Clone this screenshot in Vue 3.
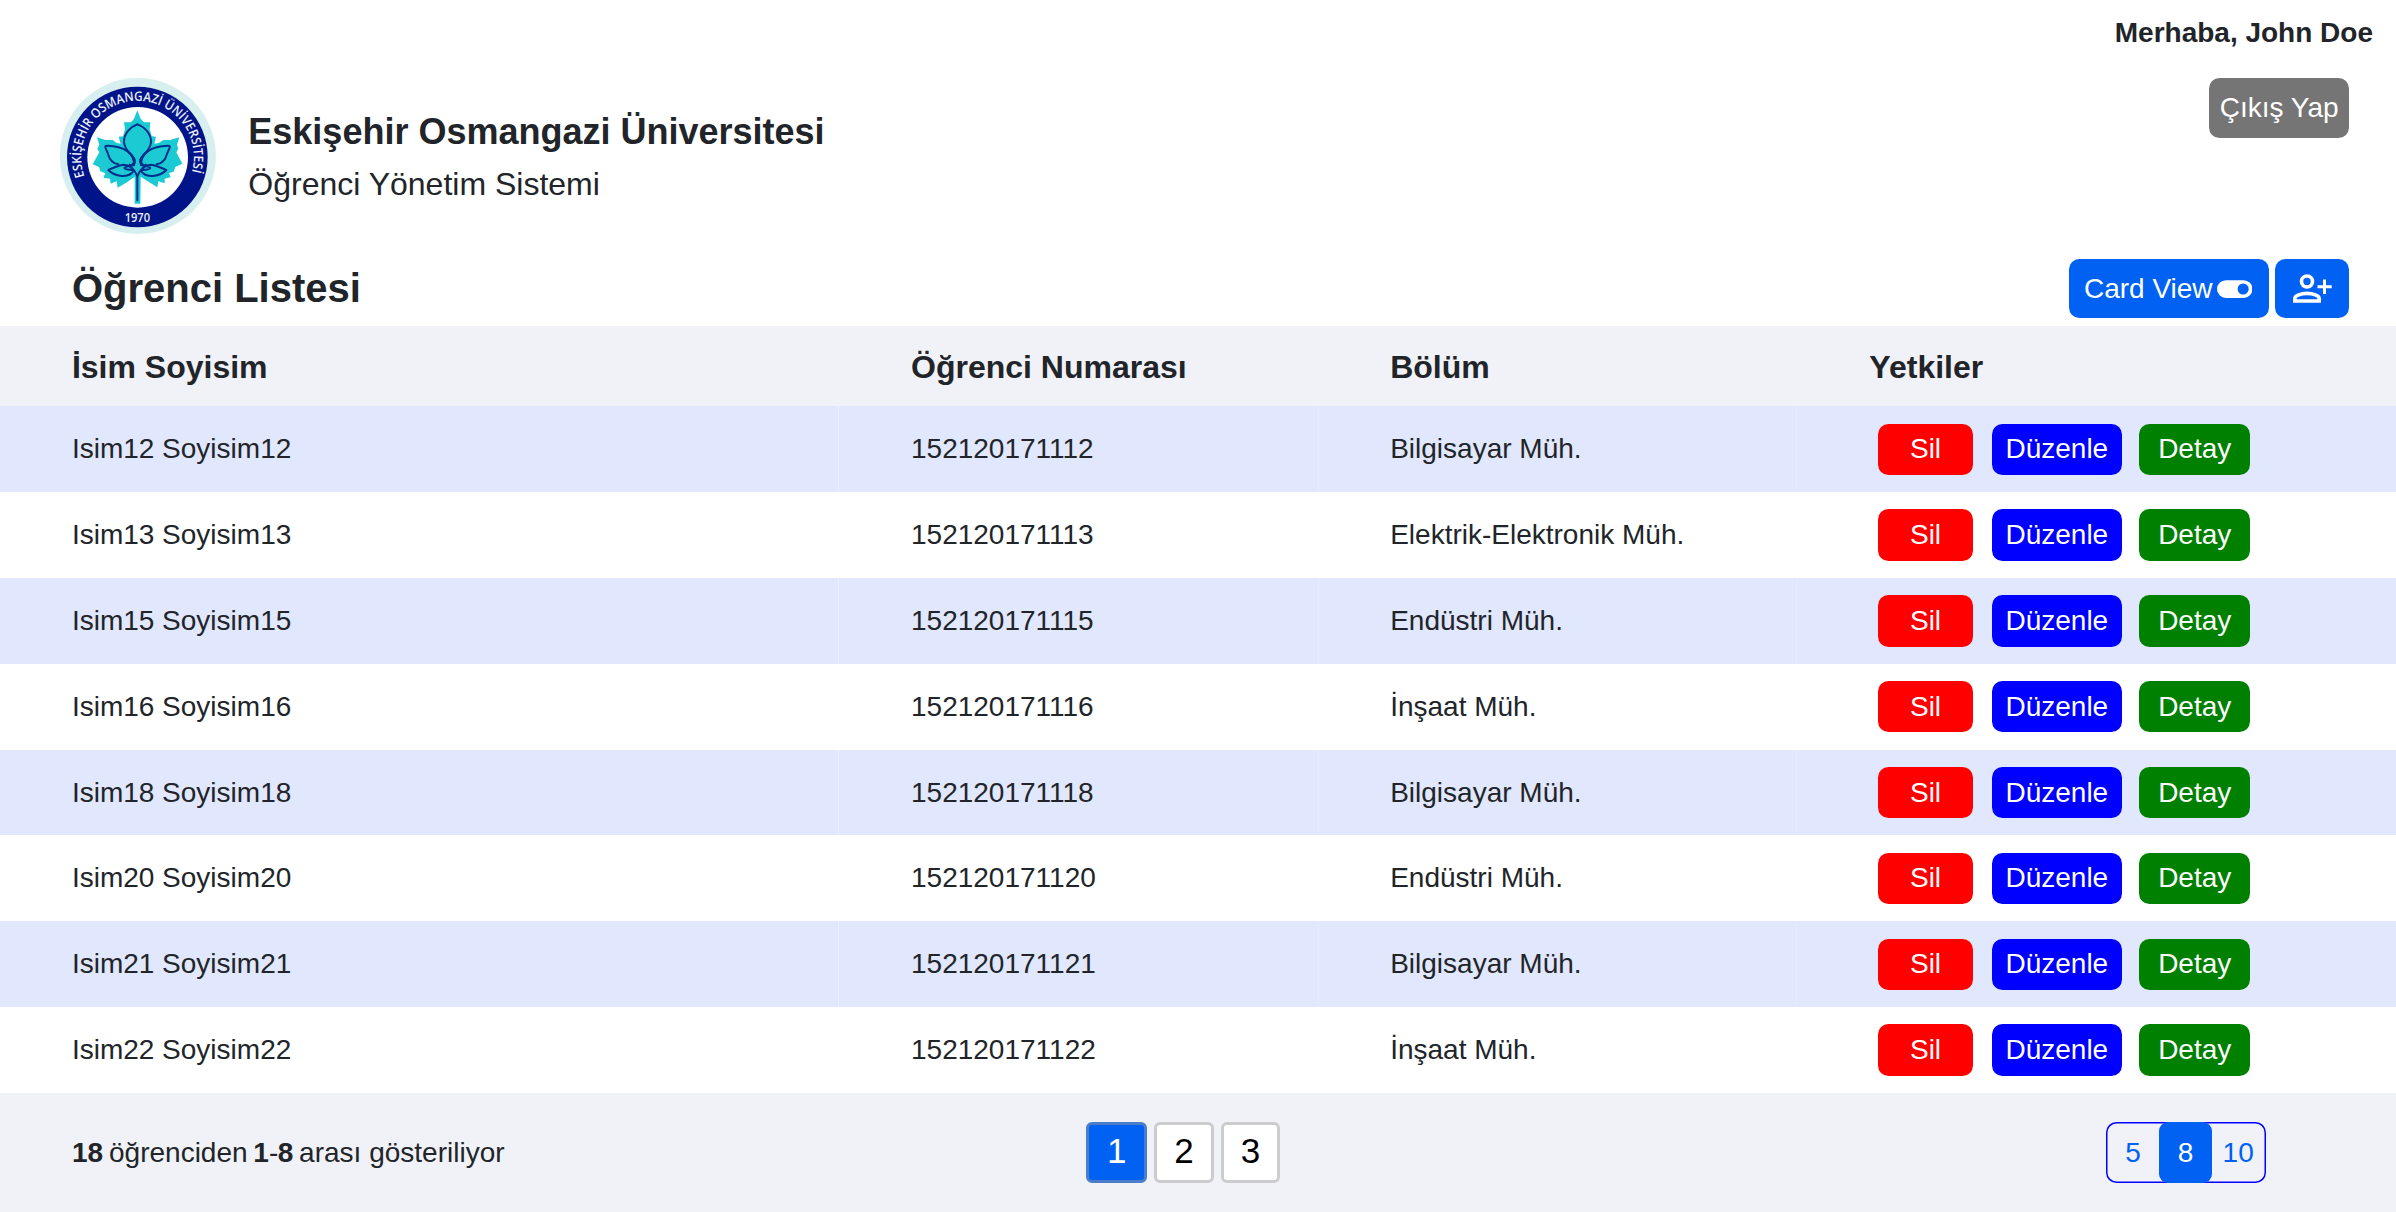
<script setup>
import { ref } from 'vue'

const students = [
  { name: 'Isim12 Soyisim12', number: '152120171112', department: 'Bilgisayar Müh.' },
  { name: 'Isim13 Soyisim13', number: '152120171113', department: 'Elektrik-Elektronik Müh.' },
  { name: 'Isim15 Soyisim15', number: '152120171115', department: 'Endüstri Müh.' },
  { name: 'Isim16 Soyisim16', number: '152120171116', department: 'İnşaat Müh.' },
  { name: 'Isim18 Soyisim18', number: '152120171118', department: 'Bilgisayar Müh.' },
  { name: 'Isim20 Soyisim20', number: '152120171120', department: 'Endüstri Müh.' },
  { name: 'Isim21 Soyisim21', number: '152120171121', department: 'Bilgisayar Müh.' },
  { name: 'Isim22 Soyisim22', number: '152120171122', department: 'İnşaat Müh.' }
]
const page = ref(1)
const pageSize = ref(8)
</script>

<template>
  <div class="app">
    <div class="greeting">Merhaba, John Doe</div>

    <header class="brand">
      <svg class="logo" viewBox="30 24 468 468">
        <circle cx="263.500" cy="258" r="234" fill="#d7efef" />
        <circle cx="262" cy="261" r="211" fill="#001489" />
        <circle cx="263" cy="262" r="151" fill="#fff" />
        <path
          fill="#1bcad3"
          d="M262 121 L272 146 L282 157 L301 157 L299 178 L305 199 L318 200 L313 221 L326 219 L340 210 L360 210 L388 202 L381 225 L385 236 L379 247 L397 281 L376 291 L371 305 L357 309 L362 322 L344 326 L344 340 L325 334 L322 352 L298 337 L272 320 L271 401 L254 401 L254 320 L231 337 L203 353 L200 334 L182 341 L180 326 L160 323 L166 310 L151 304 L147 291 L128 283 L148 247 L142 236 L148 224 L141 202 L166 210 L188 210 L200 219 L212 221 L206 200 L219 199 L225 178 L222 157 L243 157 L252 146 Z"
        />
        <g fill="none" stroke="#002f8b" stroke-width="6" stroke-linejoin="round" stroke-linecap="round">
          <path d="M262 163 C239 171 221 193 222 216 C224 244 247 252 254 269 C257 285 246 291 239 284" />
          <path d="M262 163 C286 171 304 193 303 216 C301 244 278 252 271 269 C269 285 280 291 287 284" />
          <path d="M252 286 C254 250 223 228 171 227 C160 227 170 239 174 252 C179 270 190 281 205 283" />
          <path d="M273 286 C272 250 303 228 354 227 C366 227 355 239 351 252 C346 270 335 281 320 283" />
          <path d="M262 391 L262 318 C252 295 239 284 220 284 C202 286 192 294 175 300 C192 319 238 328 252 301 C240 298 229 302 223 294 C230 287 241 289 249 282 C258 275 252 257 232 243" />
          <path d="M262 318 C272 295 285 284 304 284 C322 286 332 294 349 300 C332 319 286 328 272 301 C284 298 295 302 301 294 C294 287 284 289 276 282 C267 275 273 257 293 243" />
        </g>
        <path id="seal-arc" fill="none" d="M103.700 319 A169 169 0 1 1 421.600 319" />
        <text class="seal-text">
          <textPath href="#seal-arc" textLength="634" lengthAdjust="spacingAndGlyphs">ESKİŞEHİR OSMANGAZİ ÜNİVERSİTESİ</textPath>
        </text>
        <text class="seal-year" x="262" y="456" text-anchor="middle" textLength="76" lengthAdjust="spacingAndGlyphs">1970</text>
      </svg>
      <div class="brand-text">
        <h1>Eskişehir Osmangazi Üniversitesi</h1>
        <p>Öğrenci Yönetim Sistemi</p>
      </div>
      <button class="btn logout">Çıkış Yap</button>
    </header>

    <div class="toolbar">
      <h2>Öğrenci Listesi</h2>
      <button class="btn view">
        Card View
        <svg class="toggle" viewBox="0 0 36 18"><path fill="#fff" fill-rule="evenodd" d="M9 0 H27 A9 9 0 0 1 27 18 H9 A9 9 0 0 1 9 0 Z M26.500 3.400 A5.600 5.600 0 1 0 26.500 14.600 A5.600 5.600 0 1 0 26.500 3.400 Z" /></svg>
      </button>
      <button class="btn add" aria-label="Ekle">
        <svg viewBox="0 0 39 30">
          <g fill="none" stroke="#fff" stroke-width="3.600">
            <circle cx="14" cy="7.500" r="5.500" />
            <path d="M1.800 27 V24.500 C1.800 21.800 8 19.400 14 19.400 S26.200 21.800 26.200 24.500 V27 Z" />
            <path d="M31.500 5.500 V20 M24.500 12.700 H38.700" stroke-width="3" />
          </g>
        </svg>
      </button>
    </div>

    <div class="table">
      <div class="row head">
        <div>İsim Soyisim</div>
        <div>Öğrenci Numarası</div>
        <div>Bölüm</div>
        <div>Yetkiler</div>
      </div>
      <div v-for="s in students" :key="s.number" class="row item">
        <div>{{ s.name }}</div>
        <div>{{ s.number }}</div>
        <div>{{ s.department }}</div>
        <div class="actions">
          <button class="btn delete">Sil</button>
          <button class="btn edit">Düzenle</button>
          <button class="btn detail">Detay</button>
        </div>
      </div>
    </div>

    <footer class="footer">
      <div class="info"><b class="total">18</b> öğrenciden <b class="from">1</b>-<b class="to">8</b> arası gösteriliyor</div>
      <div class="pages">
        <button v-for="n in 3" :key="n" class="page" :class="{ active: n === page }" @click="page = n">{{ n }}</button>
      </div>
      <div class="sizes">
        <button v-for="n in [5, 8, 10]" :key="n" :class="{ active: n === pageSize }" @click="pageSize = n">{{ n }}</button>
      </div>
    </footer>
  </div>
</template>

<style>
body {
  margin: 0;
  background: #fff;
}
</style>

<style scoped>
.app {
  width: 2396px;
  height: 1212px;
  overflow: hidden;
  display: flex;
  flex-direction: column;
  box-sizing: border-box;
  color: #212529;
  font-family: "Liberation Sans", Arial, sans-serif;
  font-size: 28px;
}
button {
  font: inherit;
  border: 0;
  padding: 0;
  box-sizing: border-box;
}
h1, h2, p { margin: 0; }
.btn {
  display: flex;
  align-items: center;
  justify-content: center;
  border-radius: 10.500px;
  color: #fff;
  white-space: nowrap;
}
.greeting {
  height: 78.300px;
  line-height: 65px;
  text-align: right;
  padding-right: 23px;
  font-weight: 700;
  flex: none;
}
.brand {
  display: flex;
  align-items: flex-start;
  height: 180.700px;
  flex: none;
  padding: 0 47px 0 60px;
}
.logo {
  width: 156px;
  height: 156px;
  flex: none;
}
.seal-text, .seal-year {
  font-family: "Open Sans", "Noto Sans", sans-serif;
  font-weight: 600;
  fill: #eceefa;
}
.seal-text { font-size: 39px; }
.seal-year { font-size: 36px; }
.brand-text {
  padding: 28px 0 0 32.300px;
  flex: 1;
}
h1 {
  font-size: 36px;
  line-height: 52px;
}
p {
  font-size: 32px;
  line-height: 53px;
}
.logout {
  width: 139.700px;
  height: 59.300px;
  background: #757575;
}
.toolbar {
  display: flex;
  height: 67px;
  flex: none;
  padding: 0 47px 0 71.900px;
}
h2 {
  font-size: 40px;
  line-height: 58px;
  flex: 1;
}
.view, .add {
  height: 59.500px;
  background: #0061f2;
}
.view { width: 200px; gap: 4px; padding-right: 2px; }
.toggle { width: 35.500px; height: 18px; margin-top: 1px; }
.add { width: 74px; margin-left: 6px; }
.add svg { width: 39px; height: 30px; }
.table {
  flex: none;
}
.row {
  display: grid;
  grid-template-columns: 35% 20% 20% 25%;
  align-items: center;
}
.row > div { padding-left: 71.880px; }
.row > div:nth-child(n + 2) { padding-left: 72.400px; }
.head {
  height: 80.300px;
  padding-top: 2px;
  box-sizing: border-box;
  background: #f1f2f8;
  font-size: 32px;
  font-weight: 700;
}
.item { height: 85.840px; }
.item:nth-child(even) {
  background:
    linear-gradient(#ebf0fd, #ebf0fd) 838px 0 / 1px 100% no-repeat,
    linear-gradient(#e6ebfd, #e6ebfd) 1318px 0 / 1px 100% no-repeat,
    linear-gradient(#e6ebfd, #e6ebfd) 1796px 0 / 1px 100% no-repeat,
    #e1e7fc;
}
.row > .actions.actions {
  display: flex;
  padding-left: 81.300px;
}
.actions .btn { height: 51.300px; }
.delete { width: 94.500px; background: #f00; }
.edit { width: 130px; margin-left: 19.300px; padding-right: 0.500px; background: #00f; }
.detail { width: 110.700px; margin-left: 17.300px; background: #008000; }
.footer {
  display: flex;
  align-items: center;
  flex: 1;
  padding: 0 130.300px 0 71.900px;
  background: #f1f2f8;
}
.info { width: 1014.500px; white-space: nowrap; padding-top: 1.500px; }
.total { margin-right: -1.800px; }
.from { margin-left: -2px; }
.to { margin-left: -0.500px; margin-right: -2px; }
.pages { display: flex; gap: 6.700px; }
.page {
  width: 60.600px;
  height: 61px;
  border: 3px solid #ccc;
  border-radius: 6px;
  background: #fff;
  color: #000;
  font-size: 35px;
  line-height: 50px;
  padding-bottom: 3px;
}
.page:last-child { width: 59px; }
.page.active {
  background: #0061f2;
  border-color: #4b7ec9;
  color: #fff;
}
.sizes {
  display: flex;
  margin-left: auto;
  width: 160px;
  height: 61px;
  box-sizing: border-box;
  padding-left: 1px;
  box-shadow: inset 0 0 0 1.500px #00f;
  border-radius: 10.500px;
}
.sizes button {
  width: 52.600px;
  height: 61px;
  border-radius: 9px;
  background: none;
  color: #0061f2;
  padding-top: 1px;
}
.sizes button.active {
  background: #0061f2;
  color: #fff;
}
</style>
